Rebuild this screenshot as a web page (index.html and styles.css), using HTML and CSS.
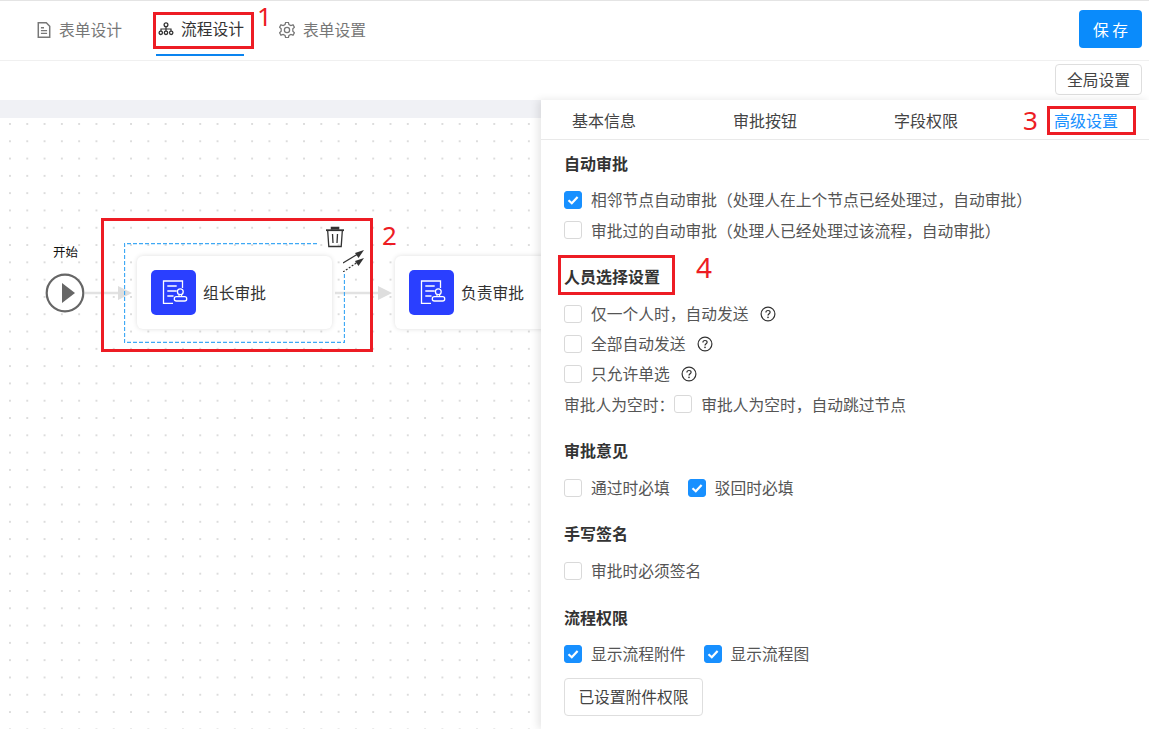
FILE: index.html
```html
<!DOCTYPE html>
<html lang="zh-CN">
<head>
<meta charset="utf-8">
<title>流程设计</title>
<link rel="stylesheet" href="styles.css">
</head>
<body>
<svg class="defs" width="0" height="0" aria-hidden="true">
  <symbol id="stamp" viewBox="0 0 45 45">
    <path d="M31.500 18V11H12.500V33.300H22" fill="none" stroke="#fff" stroke-width="1.300"/>
    <path d="M16.300 16H25.700M16.300 21H25.700M16.300 26H22.500" fill="none" stroke="#fff" stroke-width="1.400"/>
    <circle cx="29.300" cy="21.700" r="2.900" fill="none" stroke="#fff" stroke-width="1.300"/>
    <path d="M28 24.500V26.700M30.600 24.500V26.700" stroke="#fff" stroke-width="1.100"/>
    <rect x="23.300" y="26.700" width="12.400" height="4.300" rx="2.100" fill="none" stroke="#fff" stroke-width="1.300"/>
  </symbol>
  <symbol id="help" viewBox="0 0 16 16">
    <circle cx="8" cy="8" r="6.900" fill="none" stroke="#333" stroke-width="1.200"/>
    <path d="M5.900 6.400C5.900 5.200 6.800 4.500 8 4.500S10.100 5.200 10.100 6.300C10.100 7.700 8 7.800 8 9.500" fill="none" stroke="#333" stroke-width="1.200"/>
    <circle cx="8" cy="11.400" r=".8" fill="#333"/>
  </symbol>
  <symbol id="tick" viewBox="0 0 18 18">
    <path d="M4.500 9.200L7.800 12.300L13.600 6" fill="none" stroke="#fff" stroke-width="2.200"/>
  </symbol>
</svg>

<header class="topbar">
  <nav class="steps">
    <a class="step">
      <svg class="step-icon step-icon-doc" viewBox="2 1 12 14"><path d="M3 1.700H10L13 4.700V14.300H3Z" fill="none" stroke="#777" stroke-width="1.300"/><path d="M5.300 6H8M5.300 8.500H10.700M5.300 11H10.700" stroke="#777" stroke-width="1.200"/></svg>
      <span>表单设计</span>
    </a>
    <a class="step step-active">
      <svg class="step-icon" viewBox="0 0 16 16"><circle cx="8" cy="3.800" r="1.900" fill="none" stroke="#333" stroke-width="1.300"/><path d="M8 5.800V8M3 10V8H13V10M8 8V10" fill="none" stroke="#333" stroke-width="1.200"/><circle cx="2.800" cy="11.800" r="1.700" fill="none" stroke="#333" stroke-width="1.300"/><circle cx="8" cy="11.800" r="1.700" fill="none" stroke="#333" stroke-width="1.300"/><circle cx="13.200" cy="11.800" r="1.700" fill="none" stroke="#333" stroke-width="1.300"/></svg>
      <span>流程设计</span>
    </a>
    <a class="step">
      <svg class="step-icon" viewBox="1 1 14 14"><path d="M6.800 1.300H9.200L9.700 3.200L11.400 4.100L13.300 3.500L14.500 5.600L13.100 7V9L14.500 10.400L13.300 12.500L11.400 11.900L9.700 12.800L9.200 14.700H6.800L6.300 12.800L4.600 11.900L2.700 12.500L1.500 10.400L2.900 9V7L1.500 5.600L2.700 3.500L4.600 4.100L6.300 3.200Z" fill="none" stroke="#777" stroke-width="1.100"/><circle cx="8" cy="8" r="2.300" fill="none" stroke="#777" stroke-width="1.100"/></svg>
      <span>表单设置</span>
    </a>
  </nav>
  <button class="save">保 存</button>
</header>

<div class="toolbar">
  <button class="plain-btn">全局设置</button>
</div>

<main class="workspace">
  <section class="canvas">
    <div class="canvas-band"></div>
    <div class="canvas-grid"></div>

    <span class="start-label">开始</span>
    <svg class="start" viewBox="0 0 40 40"><circle cx="20" cy="20" r="18.300" fill="#fff" stroke="#666" stroke-width="2.200"/><path d="M17 10L30 20L17 30Z" fill="#666"/></svg>

    <svg class="edge edge-one" viewBox="0 0 48 14"><path d="M0 7H36" stroke="#e2e2e2" stroke-width="2.500"/><path d="M33 0L47 7L33 14Z" fill="#dedede"/></svg>
    <svg class="edge edge-two" viewBox="0 0 58 14"><path d="M0 7H46" stroke="#e2e2e2" stroke-width="2.500"/><path d="M43 0L57 7L43 14Z" fill="#dedede"/></svg>

    <svg class="selection" viewBox="0 0 221 100"><path d="M193 .5H.5V99.500H220.500V30" fill="none" stroke="#3fa9f5" stroke-width="1.300" stroke-dasharray="4 2"/></svg>
    <svg class="trash" viewBox="0 0 20 22"><path d="M1 4.200H19" stroke="#333" stroke-width="1.800"/><path d="M6.500 3.500V1.500H13.500V3.500" fill="#333" stroke="#333" stroke-width="1.500"/><path d="M2.700 5L3.800 20.500H16.200L17.300 5" fill="none" stroke="#333" stroke-width="1.300"/><path d="M7.500 8L8 17M12.500 8L12 17" stroke="#333" stroke-width="1.300"/></svg>
    <svg class="link-arrows" viewBox="0 0 22 22"><path d="M0 13L14 4.500" stroke="#333" stroke-width="1.200"/><path d="M21 0L15.500 8L12 3Z" fill="#333"/><path d="M0 22L14 12.500" stroke="#333" stroke-width="1.200" stroke-dasharray="2 1.500"/><path d="M21 8L15.500 16L12 11Z" fill="#333"/></svg>

    <article class="node node-one">
      <svg class="node-icon"><use href="#stamp"/></svg>
      <span>组长审批</span>
    </article>
    <article class="node node-two">
      <svg class="node-icon"><use href="#stamp"/></svg>
      <span>负责审批</span>
    </article>
  </section>

  <aside class="panel">
    <nav class="panel-tabs">
      <a>基本信息</a>
      <a>审批按钮</a>
      <a>字段权限</a>
      <a class="tab-active">高级设置</a>
    </nav>
    <div class="panel-body">
      <section class="group">
        <h3>自动审批</h3>
        <label class="row"><i class="check on"><svg><use href="#tick"/></svg></i>相邻节点自动审批（处理人在上个节点已经处理过，自动审批）</label>
        <label class="row"><i class="check"></i>审批过的自动审批（处理人已经处理过该流程，自动审批）</label>
      </section>
      <section class="group">
        <h3>人员选择设置</h3>
        <label class="row"><i class="check"></i>仅一个人时，自动发送<svg class="help"><use href="#help"/></svg></label>
        <label class="row"><i class="check"></i>全部自动发送<svg class="help"><use href="#help"/></svg></label>
        <label class="row"><i class="check"></i>只允许单选<svg class="help"><use href="#help"/></svg></label>
        <div class="row"><span>审批人为空时：</span><i class="check"></i>审批人为空时，自动跳过节点</div>
      </section>
      <section class="group">
        <h3>审批意见</h3>
        <div class="row">
          <label class="inline"><i class="check"></i>通过时必填</label>
          <label class="inline"><i class="check on"><svg><use href="#tick"/></svg></i>驳回时必填</label>
        </div>
      </section>
      <section class="group">
        <h3>手写签名</h3>
        <label class="row"><i class="check"></i>审批时必须签名</label>
      </section>
      <section class="group">
        <h3>流程权限</h3>
        <div class="row">
          <label class="inline"><i class="check on"><svg><use href="#tick"/></svg></i>显示流程附件</label>
          <label class="inline"><i class="check on"><svg><use href="#tick"/></svg></i>显示流程图</label>
        </div>
        <button class="plain-btn attach">已设置附件权限</button>
      </section>
    </div>
  </aside>
</main>

<div class="mark mark-one"></div><span class="num num-one">1</span>
<div class="mark mark-two"></div><span class="num num-two">2</span>
<div class="mark mark-three"></div><span class="num num-three">3</span>
<div class="mark mark-four"></div><span class="num num-four">4</span>
</body>
</html>
```

FILE: styles.css
```css
* { box-sizing: border-box; }
html, body { margin: 0; height: 100%; }
body {
  position: relative;
  width: 1149px;
  height: 729px;
  overflow: hidden;
  background: #fff;
  color: #555;
  font-family: "Noto Sans CJK SC", "Liberation Sans", sans-serif;
  font-size: 15.75px;
}
.defs { position: absolute; }

.topbar {
  height: 61px;
  display: flex;
  justify-content: space-between;
  align-items: flex-start;
  padding-right: 7px;
  border-top: 1px solid #e4e4e4;
  border-bottom: 1px solid #f0f0f0;
}
.steps { display: flex; padding-left: 37px; }
.step {
  display: flex;
  align-items: center;
  gap: 8px;
  height: 54.500px;
  padding-top: 3px;
  margin-right: 35px;
  color: #777;
  line-height: 1;
}
.step-icon { width: 16px; height: 16px; }
.step-icon-doc { width: 14px; }
.step-active {
  gap: 7px;
  margin-left: -1px;
  margin-right: 35px;
  padding-left: 2px;
  color: #333;
  border-bottom: 2px solid #0a84f0;
}
.save {
  width: 63px;
  height: 38px;
  margin-top: 9px;
  border: 0;
  border-radius: 4px;
  background: #0a8bfb;
  color: #fff;
  font: inherit;
}

.toolbar {
  height: 39px;
  display: flex;
  justify-content: flex-end;
  align-items: flex-start;
  padding: 3px 7px 0 0;
}
.plain-btn {
  height: 31px;
  padding: 0 11px;
  border: 1px solid #dedede;
  border-radius: 4px;
  background: #fff;
  color: #444;
  font: inherit;
  line-height: 1;
}

.workspace { display: flex; height: 629px; }
.canvas {
  position: relative;
  flex: 0 0 541px;
  overflow: hidden;
  display: flex;
  flex-direction: column;
}
.canvas-band { height: 18px; background: #f0f1f5; }
.canvas-grid {
  flex: 1;
  background-image: radial-gradient(circle at 1px 1px, #dcdcdc .8px, transparent 1.100px);
  background-size: 17.300px 17.300px;
  background-position: 9px 5px;
}
.start-label {
  position: absolute;
  left: 53px;
  top: 144px;
  color: #111;
  font-size: 12.500px;
  line-height: 16px;
}
.start { position: absolute; left: 45px; top: 173px; width: 40px; height: 40px; }
.edge { position: absolute; height: 14px; }
.edge-one { left: 85px; top: 186px; width: 48px; }
.edge-two { left: 335px; top: 186px; width: 58px; }
.selection { position: absolute; left: 124px; top: 143px; width: 221px; height: 100px; }
.trash { position: absolute; left: 325px; top: 126px; width: 20px; height: 22px; }
.link-arrows { position: absolute; left: 343px; top: 150px; width: 22px; height: 22px; }
.node {
  position: absolute;
  top: 156px;
  height: 73px;
  display: flex;
  align-items: center;
  gap: 7px;
  padding-left: 14px;
  border-radius: 6px;
  background: #fff;
  box-shadow: 0 0 5px rgba(0, 0, 0, .13);
  color: #333;
  line-height: 1;
}
.node-one { left: 137px; width: 195px; }
.node-two { left: 395px; width: 195px; }
.node-icon {
  flex: none;
  width: 45px;
  height: 45px;
  border-radius: 5px;
  background: #2a3fff;
}

.panel {
  position: relative;
  z-index: 1;
  flex: 1;
  background: #fff;
  box-shadow: -3px 0 8px rgba(0, 0, 0, .1);
  overflow: hidden;
}
.panel-tabs {
  height: 40px;
  display: flex;
  align-items: center;
  gap: 97px;
  padding-left: 31px;
  border-bottom: 1px solid #e9e9e9;
  color: #444;
  font-size: 16px;
  line-height: 1;
}
.tab-active { color: #1890ff; margin-left: -1px; }
.panel-body { padding: 10px 0 0 23px; }
.group { margin-bottom: 17.800px; }
.group h3 {
  height: 30px;
  margin: 0 0 5px;
  color: #333;
  font-size: 16px;
  font-weight: 700;
  line-height: 26px;
}
.row {
  height: 30.300px;
  display: flex;
  align-items: center;
  line-height: 1;
}
.inline { display: flex; align-items: center; margin-right: 18px; }
.check {
  flex: none;
  width: 18px;
  height: 18px;
  margin-right: 9px;
  border: 1px solid #d9d9d9;
  border-radius: 3px;
  background: #fff;
}
.check svg { display: block; width: 18px; height: 18px; margin: -1px; }
.check.on { background: #1890ff; border-color: #1890ff; }
.help { width: 16px; height: 16px; margin-left: 11px; }
.attach { display: block; height: 38px; width: 139px; margin-top: 9px; padding: 0; }

.mark { position: absolute; z-index: 2; border: 3px solid #ed1c24; pointer-events: none; }
.mark-one { left: 153px; top: 12px; width: 101px; height: 37px; }
.mark-two { left: 101px; top: 218px; width: 272px; height: 134px; }
.mark-three { left: 1047px; top: 106px; width: 89px; height: 29px; }
.mark-four { left: 558px; top: 255px; width: 117px; height: 40px; }
.num {
  position: absolute;
  z-index: 2;
  color: #ed1c24;
  font-family: "Noto Sans", "Liberation Sans", sans-serif;
  font-size: 26px;
  line-height: 30px;
}
.num-one { left: 257px; top: 1px; }
.num-two { left: 382px; top: 220px; }
.num-three { left: 1023px; top: 105px; }
.num-four { left: 696px; top: 252px; font-size: 28px; }
```
